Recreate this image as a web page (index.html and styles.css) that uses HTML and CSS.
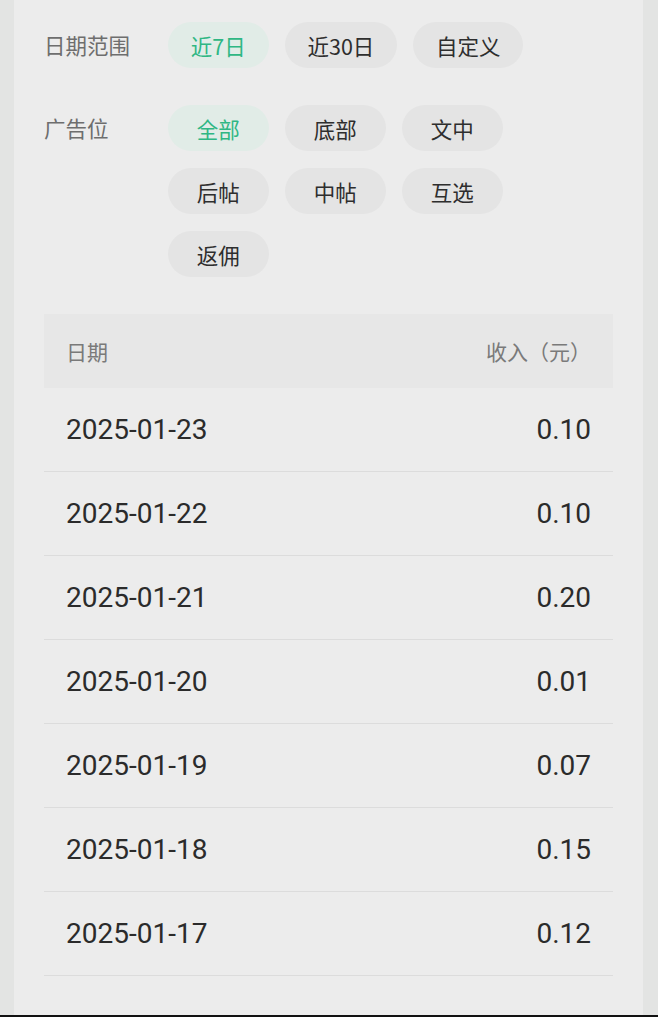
FILE: index.html
```html
<!DOCTYPE html>
<html lang="zh-CN">
<head>
<meta charset="utf-8">
<title>收入明细</title>
<link rel="stylesheet" href="styles.css">
</head>
<body>
<div class="screen">
  <div class="main">
    <div class="filter">
      <div class="filter-label">日期范围</div>
      <div class="pills">
        <span class="pill active">近7日</span>
        <span class="pill">近30日</span>
        <span class="pill">自定义</span>
      </div>
    </div>
    <div class="filter">
      <div class="filter-label">广告位</div>
      <div class="pills">
        <span class="pill active">全部</span>
        <span class="pill">底部</span>
        <span class="pill">文中</span>
        <span class="pill">后帖</span>
        <span class="pill">中帖</span>
        <span class="pill">互选</span>
        <span class="pill">返佣</span>
      </div>
    </div>
    <div class="table">
      <div class="thead">
        <span>日期</span>
        <span>收入（元）</span>
      </div>
      <div class="row"><span>2025-01-23</span><span>0.10</span></div>
      <div class="row"><span>2025-01-22</span><span>0.10</span></div>
      <div class="row"><span>2025-01-21</span><span>0.20</span></div>
      <div class="row"><span>2025-01-20</span><span>0.01</span></div>
      <div class="row"><span>2025-01-19</span><span>0.07</span></div>
      <div class="row"><span>2025-01-18</span><span>0.15</span></div>
      <div class="row"><span>2025-01-17</span><span>0.12</span></div>
    </div>
  </div>
</div>
<div class="bottom-bar"></div>
</body>
</html>
```

FILE: styles.css
```css
html, body {
  margin: 0;
  padding: 0;
}
body {
  background: #e3e4e3;
  font-family: "Noto Sans CJK SC", "Noto Sans", sans-serif;
  width: 658px;
  height: 1017px;
  overflow: hidden;
}
.screen {
  height: 1015px;
  padding: 0 15px 0 14px;
  box-sizing: border-box;
}
.main {
  background: #ececec;
  height: 100%;
  padding: 22px 30px 0 30px;
  box-sizing: border-box;
}
.filter {
  display: flex;
  align-items: flex-start;
  margin-bottom: 37px;
}
.filter:last-of-type {
  margin-bottom: 39px;
}
.filter-label {
  width: 124px;
  flex: none;
  height: 46px;
  line-height: 46px;
  font-size: 21.5px;
  color: #6e6e6e;
}
.pills {
  display: flex;
  flex-wrap: wrap;
  gap: 17px 16.5px;
  flex: 1;
}
.pill {
  display: inline-flex;
  justify-content: center;
  align-items: center;
  min-width: 100.5px;
  height: 46px;
  padding: 0 22.5px;
  box-sizing: border-box;
  border-radius: 23px;
  background: #e4e4e4;
  color: #2e2e2e;
  font-size: 21.5px;
}
.pill.active {
  background: #e1ece7;
  color: #2fb784;
}
.table {
  display: flex;
  flex-direction: column;
}
.thead {
  display: flex;
  justify-content: space-between;
  align-items: center;
  height: 74px;
  padding: 0 22px;
  background: #e7e7e7;
  color: #7a7a7a;
  font-size: 21px;
}
.row {
  display: flex;
  justify-content: space-between;
  align-items: center;
  height: 84px;
  padding: 0 22px;
  box-sizing: border-box;
  border-bottom: 1px solid #dcdcdc;
  font-family: Roboto, "Noto Sans", sans-serif;
  font-size: 28px;
  color: #2b2b2b;
}
.bottom-bar {
  height: 2px;
  background: #111;
}
```
